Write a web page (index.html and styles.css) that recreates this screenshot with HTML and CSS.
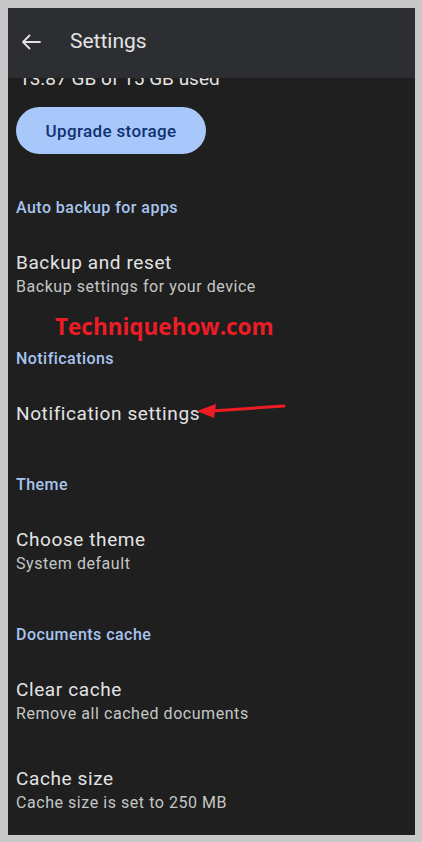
FILE: index.html
```html
<!DOCTYPE html>
<html lang="en">
<head>
<meta charset="utf-8">
<title>Settings</title>
<link rel="stylesheet" href="styles.css">
</head>
<body>
<div class="frame">
  <div class="phone">
    <header class="appbar">
      <svg class="back" width="20" height="16" viewBox="0 0 20 16" aria-hidden="true">
        <path d="M19 8H2M8.5 1.5L2 8l6.5 6.5" fill="none" stroke="#e3e3e3" stroke-width="1.8" stroke-linecap="round" stroke-linejoin="round"/>
      </svg>
      <h1 class="title">Settings</h1>
    </header>
    <main class="content">
      <div class="storage">13.87 GB of 15 GB used</div>
      <button class="upgrade">Upgrade storage</button>

      <section class="section">
        <h2 class="section-head">Auto backup for apps</h2>
        <div class="item item-first">
          <div class="item-title">Backup and reset</div>
          <div class="item-sub">Backup settings for your device</div>
        </div>
      </section>

      <section class="section">
        <h2 class="section-head">Notifications</h2>
        <div class="item">
          <div class="item-title">Notification settings</div>
        </div>
      </section>

      <section class="section">
        <h2 class="section-head">Theme</h2>
        <div class="item">
          <div class="item-title">Choose theme</div>
          <div class="item-sub">System default</div>
        </div>
      </section>

      <section class="section">
        <h2 class="section-head">Documents cache</h2>
        <div class="item">
          <div class="item-title">Clear cache</div>
          <div class="item-sub">Remove all cached documents</div>
        </div>
        <div class="item item-last">
          <div class="item-title">Cache size</div>
          <div class="item-sub">Cache size is set to 250 MB</div>
        </div>
      </section>
    </main>

    <div class="watermark">Techniquehow.com</div>
    <svg class="pointer" width="94" height="22" viewBox="0 0 94 22" aria-hidden="true">
      <path d="M18 11L90 6" stroke="#ee1c24" stroke-width="3" stroke-linecap="round" fill="none"/>
      <path d="M3 11L22 4L20 18Z" fill="#ee1c24"/>
    </svg>
  </div>
</div>
</body>
</html>
```

FILE: styles.css
```css
* { box-sizing: border-box; }

html, body {
  margin: 0;
  padding: 0;
  background: #c8c8c8;
}

body {
  font-family: Roboto, "Noto Sans", "Liberation Sans", sans-serif;
}

.frame {
  width: 422px;
  height: 842px;
  padding: 8px 7px 7px 8px;
  background: #c8c8c8;
}

.phone {
  position: relative;
  width: 407px;
  height: 827px;
  background: #1f1f1f;
  overflow: hidden;
  display: flex;
  flex-direction: column;
}

.appbar {
  flex: 0 0 70px;
  height: 70px;
  background: #2d2e31;
  display: flex;
  align-items: center;
  padding: 0 0 3px 13px;
  gap: 29px;
  position: relative;
  z-index: 2;
}

.back {
  display: block;
  flex: none;
}

.title {
  margin: 0;
  font-size: 21px;
  font-weight: 400;
  color: #e3e3e3;
  line-height: 28px;
  padding-bottom: 2px;
}

.content {
  flex: 1;
  overflow: hidden;
  padding: 0 8px;
  display: flex;
  flex-direction: column;
  align-items: flex-start;
}

.storage {
  margin-top: -11px;
  font-size: 19px;
  line-height: 24px;
  color: #e3e3e3;
  padding-left: 3px;
}

.upgrade {
  margin: 16px 0 15px;
  width: 190px;
  height: 47px;
  border: none;
  border-radius: 24px;
  background: #a8c7fa;
  color: #0e3272;
  font-family: Roboto, "Noto Sans", sans-serif;
  font-size: 17px;
  font-weight: 500;
  letter-spacing: 0.35px;
  padding: 0;
}

.section {
  width: 100%;
}

.section-head {
  margin: 0;
  padding: 27px 0 11px;
  font-size: 16px;
  line-height: 24px;
  font-weight: 500;
  letter-spacing: 0.45px;
  color: #a8c4ee;
}

.item {
  padding: 20px 0;
}

.item-first {
  padding-bottom: 21px;
}

.item-last {
  padding-top: 21px;
}

.item-title {
  font-size: 19px;
  line-height: 24px;
  letter-spacing: 0.6px;
  color: #e3e3e3;
}

.item-sub {
  font-size: 16px;
  line-height: 24px;
  letter-spacing: 0.55px;
  color: #c4c7c5;
}

.watermark {
  position: absolute;
  left: 47px;
  top: 303px;
  font-family: "Open Sans", "Liberation Sans", sans-serif;
  font-weight: 700;
  font-size: 22.5px;
  line-height: 32px;
  color: #ee1c24;
  z-index: 3;
}

.pointer {
  position: absolute;
  left: 186px;
  top: 392px;
  z-index: 3;
}
```
